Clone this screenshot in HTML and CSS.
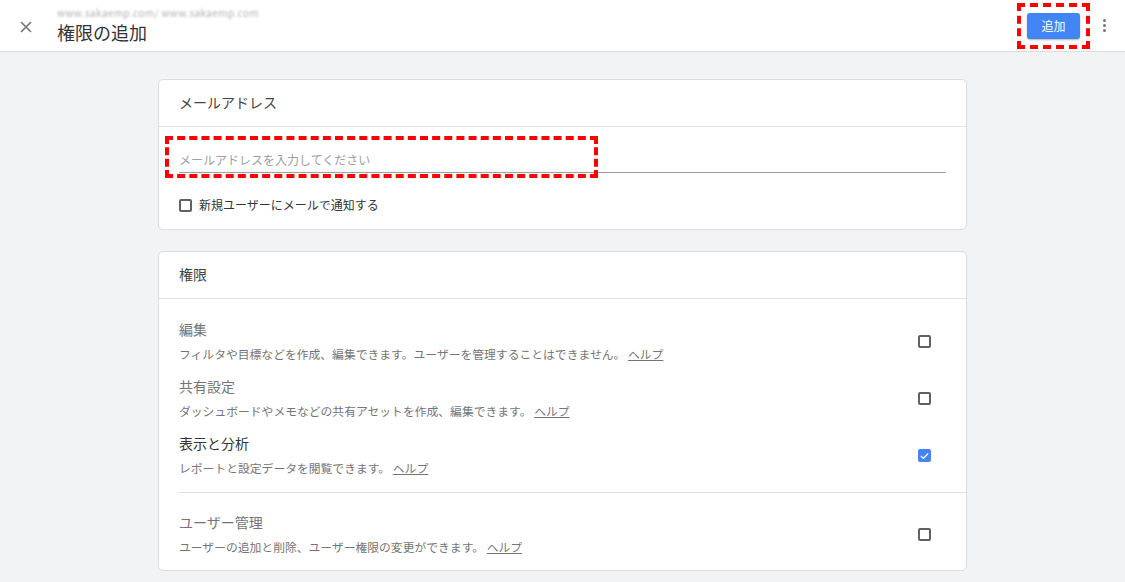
FILE: index.html
```html
<!DOCTYPE html>
<html>
<head>
	<meta charset="utf-8">
	<title>権限の追加</title>
	<link rel="stylesheet" href="styles.css">
</head>
<body>

	<div class="topbar">
		<span class="cerrar">
			<svg width="12" height="12" viewBox="0 0 12 12"><path d="M1 1L11 11M11 1L1 11" stroke="#757575" stroke-width="1.6"/></svg>
		</span>
		<div class="titulo">
			<div class="cuenta">www.sakaemp.com/ www.sakaemp.com</div>
			<h1>権限の追加</h1>
		</div>
		<div class="marca">
			<button class="agregar">追加</button>
		</div>
		<span class="puntos"><i></i><i></i><i></i></span>
	</div>

	<div class="contenido">

		<div class="tarjeta">
			<div class="cabecera">メールアドレス</div>
			<div class="cuerpo">
				<div class="campo">
					<input type="text" placeholder="メールアドレスを入力してください">
					<span class="marca-campo"></span>
				</div>
				<label class="aviso"><span class="caja"></span>新規ユーザーにメールで通知する</label>
			</div>
		</div>

		<div class="tarjeta">
			<div class="cabecera">権限</div>
			<div class="grupo">
				<div class="permiso">
					<div>
						<p class="nombre">編集</p>
						<p class="desc">フィルタや目標などを作成、編集できます。ユーザーを管理することはできません。 <a href="#">ヘルプ</a></p>
					</div>
					<span class="caja"></span>
				</div>
				<div class="permiso">
					<div>
						<p class="nombre">共有設定</p>
						<p class="desc">ダッシュボードやメモなどの共有アセットを作成、編集できます。 <a href="#">ヘルプ</a></p>
					</div>
					<span class="caja"></span>
				</div>
				<div class="permiso">
					<div>
						<p class="nombre activo">表示と分析</p>
						<p class="desc">レポートと設定データを閲覧できます。 <a href="#">ヘルプ</a></p>
					</div>
					<span class="caja marcada">
						<svg width="10" height="8" viewBox="0 0 10 8"><path d="M1 4L3.8 6.6L9 1.2" fill="none" stroke="#fff" stroke-width="1.4"/></svg>
					</span>
				</div>
			</div>
			<div class="grupo ultimo">
				<div class="permiso">
					<div>
						<p class="nombre">ユーザー管理</p>
						<p class="desc">ユーザーの追加と削除、ユーザー権限の変更ができます。 <a href="#">ヘルプ</a></p>
					</div>
					<span class="caja"></span>
				</div>
			</div>
		</div>

	</div>

</body>
</html>
```

FILE: styles.css
```css
*{
	box-sizing: border-box;
}

body{
	margin: 0;
	background: #f1f3f4;
	font-family: "Noto Sans CJK JP", "Noto Sans", sans-serif;
	color: #333;
}

.topbar{
	display: flex;
	align-items: center;
	height: 52px;
	background: #fff;
	border-bottom: 1px solid #dadce0;
	padding: 0 19px 0 20px;
}

.cerrar{
	display: flex;
	width: 37px;
	padding-top: 2px;
}

.titulo{
	flex: 1;
	padding-top: 1px;
}

.cuenta{
	font-size: 10px;
	line-height: 12px;
	color: #b0b0b0;
	filter: blur(1px);
	letter-spacing: 0.4px;
}

.titulo h1{
	margin: 0;
	font-size: 18px;
	line-height: 26px;
	font-weight: normal;
	color: #333;
}

.marca{
	border: 4px dashed #f00;
	padding: 6px;
	margin-right: 10px;
}

.agregar{
	display: block;
	width: 53px;
	height: 26px;
	border: none;
	border-radius: 3px;
	background: #4285f4;
	color: #fff;
	font-family: inherit;
	font-size: 12px;
	box-shadow: 0 1px 2px rgba(0,0,0,0.3);
}

.puntos{
	display: flex;
	flex-direction: column;
	gap: 2px;
	padding-left: 3px;
}

.puntos i{
	display: block;
	width: 3px;
	height: 3px;
	border-radius: 50%;
	background: #757575;
}

.contenido{
	width: 809px;
	margin: 0 auto;
	padding-top: 27px;
}

.tarjeta{
	background: #fff;
	border: 1px solid #dadce0;
	border-radius: 5px;
	margin-bottom: 21px;
}

.cabecera{
	height: 47px;
	line-height: 45px;
	padding: 0 20px;
	font-size: 14px;
	color: #444;
	border-bottom: 1px solid #e0e0e0;
}

.cuerpo{
	padding: 18px 20px 16px;
}

.campo{
	position: relative;
	border-bottom: 1px solid #9e9e9e;
}

.campo input{
	display: block;
	width: 100%;
	height: 27px;
	border: none;
	outline: none;
	padding: 2px 0 0;
	font-family: inherit;
	font-size: 12px;
}

.campo input::placeholder{
	color: #9e9e9e;
}

.marca-campo{
	position: absolute;
	left: -14px;
	top: -9px;
	width: 433px;
	height: 42px;
	border: 4px dashed #f00;
	pointer-events: none;
}

.aviso{
	display: flex;
	align-items: center;
	gap: 7px;
	margin-top: 24px;
	font-size: 12px;
	line-height: 16px;
	color: #333;
}

.caja{
	display: flex;
	align-items: center;
	justify-content: center;
	flex: none;
	width: 13px;
	height: 13px;
	border: 2px solid #616161;
	border-radius: 2px;
}

.caja.marcada{
	background: #4285f4;
	border-color: #4285f4;
}

.grupo{
	padding: 20px 35px 14px 20px;
	display: flex;
	flex-direction: column;
	gap: 12px;
}

.grupo.ultimo{
	border-top: 1px solid #e0e0e0;
	margin-left: 20px;
	padding: 19px 35px 13px 0;
}

.permiso{
	display: flex;
	align-items: center;
	justify-content: space-between;
}

.permiso p{
	margin: 0;
}

.nombre{
	font-size: 14px;
	line-height: 20px;
	color: #757575;
	margin-bottom: 5px !important;
}

.nombre.activo{
	color: #333;
}

.desc{
	font-size: 11.8px;
	line-height: 20px;
	color: #757575;
}

.desc a{
	color: #757575;
}
```
